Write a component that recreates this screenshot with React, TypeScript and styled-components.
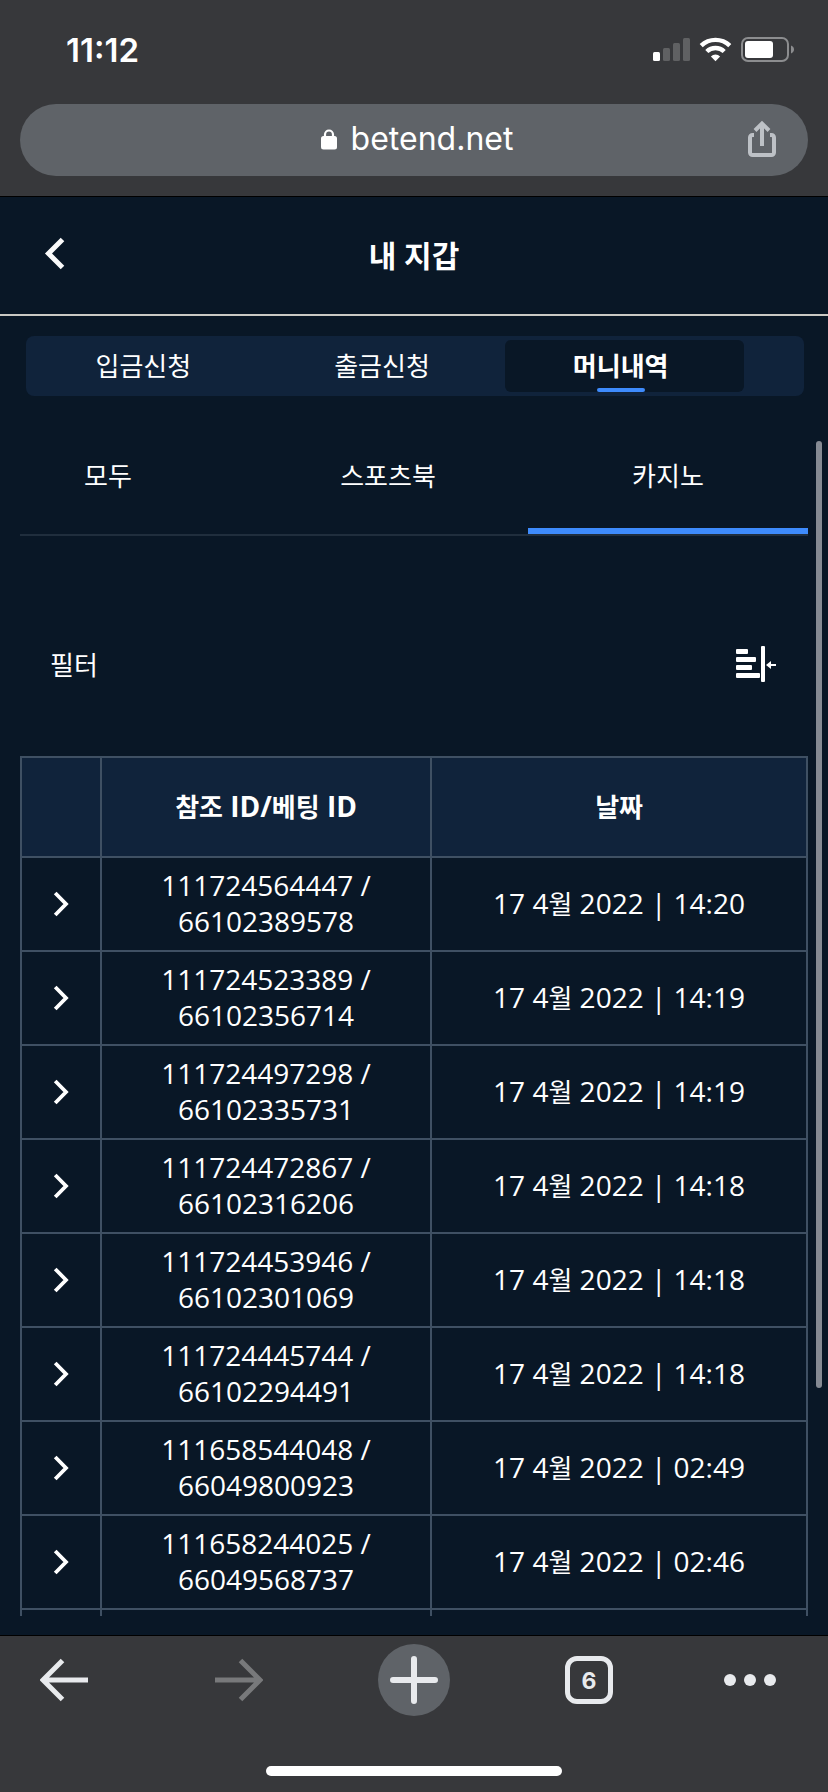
import React, { useState } from "react";
import styled, { createGlobalStyle } from "styled-components";

const colors = {
  chrome: "#37383b",
  pill: "#5f6368",
  page: "#091726",
  panel: "#10233b",
  accent: "#3e8bfc",
  border: "#3f5063",
  icon: "#e8eaed",
};

const GlobalStyle = createGlobalStyle`
  *, *::before, *::after { box-sizing: border-box; }
  html, body, #root { height: 100%; }
  body {
    margin: 0;
    background: ${colors.page};
    color: #fff;
    font-family: "Open Sans", "Noto Sans CJK KR", sans-serif;
    font-size: 28px;
  }
  button {
    padding: 0;
    border: 0;
    background: none;
    color: inherit;
    font: inherit;
    cursor: pointer;
  }
  svg { display: block; }
`;

const Screen = styled.div`
  display: flex;
  flex-direction: column;
  min-height: 100%;
`;

const BrowserTop = styled.header`
  padding: 0 20px 20px;
  background: ${colors.chrome};
  border-bottom: 1px solid #000;
  font-family: Inter, sans-serif;
`;

const StatusBar = styled.div`
  display: flex;
  align-items: center;
  justify-content: space-between;
  height: 104px;
  padding: 0 13px 4px 46px;
`;

const Clock = styled.time`
  font-size: 33px;
  font-weight: 600;
`;

const AddressBar = styled.div`
  display: grid;
  grid-template-columns: 1fr auto 1fr;
  align-items: center;
  height: 72px;
  padding: 0 32px 2px 38px;
  border-radius: 36px;
  background: ${colors.pill};
`;

const Address = styled.button`
  grid-column: 2;
  display: flex;
  align-items: center;
  gap: 14px;
  font-size: 32px;
  line-height: 40px;
`;

const ShareButton = styled.button`
  justify-self: end;
`;

const Page = styled.main`
  position: relative;
  flex: 1;
  background: ${colors.page};
`;

const ScrollThumb = styled.div`
  position: absolute;
  top: 244px;
  right: 6px;
  bottom: 247px;
  width: 6px;
  border-radius: 3px;
  background: #858a93;
`;

const PageHeader = styled.div`
  display: grid;
  grid-template-columns: 1fr auto 1fr;
  align-items: center;
  height: 119px;
  padding: 0 44px;
  border-bottom: 2px solid #cac9c4;
`;

const BackButton = styled.button`
  justify-self: start;
`;

const Title = styled.h1`
  margin: 0;
  font-size: 30px;
  line-height: 40px;
  font-weight: 700;
`;

const WalletTabs = styled.div`
  display: flex;
  height: 60px;
  margin: 20px 24px 0 26px;
  padding: 4px 60px 4px 2px;
  border-radius: 8px;
  background: ${colors.panel};
`;

const WalletTab = styled.button<{ $active: boolean }>`
  position: relative;
  flex: 1;
  padding: 0 8px 0 0;
  border-radius: 6px;
  background: ${(p) => (p.$active ? colors.page : "transparent")};
  font-size: 26px;
  line-height: 40px;
  font-weight: ${(p) => (p.$active ? 700 : 400)};

  &::after {
    content: "";
    position: absolute;
    bottom: 0;
    left: calc(50% - 28px);
    display: ${(p) => (p.$active ? "block" : "none")};
    width: 48px;
    height: 4px;
    border-radius: 2px;
    background: ${colors.accent};
  }
`;

const CategoryTabs = styled.div`
  display: flex;
  justify-content: flex-end;
  margin: 20px 20px 0;
  border-bottom: 2px solid #202e3d;
  overflow: hidden;
`;

const CategoryTab = styled.button<{ $active: boolean }>`
  flex: 1 0 280px;
  height: 118px;
  padding-top: 6px;
  border-bottom: 6px solid ${(p) => (p.$active ? colors.accent : "transparent")};
  font-size: 26px;
`;

const FilterRow = styled.div`
  display: flex;
  align-items: center;
  justify-content: space-between;
  margin: 108px 52px 72px 50px;
  height: 40px;
  font-size: 26px;
`;

const HistoryTable = styled.table`
  width: calc(100% - 40px);
  margin: 0 20px;
  border-collapse: collapse;
  table-layout: fixed;
`;

const ExpandCol = styled.col`
  width: 80px;
`;

const IdCol = styled.col`
  width: 42%;
`;

const HeadCell = styled.th`
  height: 100px;
  padding: 0 0 2px;
  border: 2px solid ${colors.border};
  background: ${colors.panel};
  font-weight: 700;
`;

const Cell = styled.td`
  height: 94px;
  padding: 0 48px 2px;
  border: 2px solid ${colors.border};
  line-height: 36px;
  text-align: center;
`;

const IconCell = styled(Cell)`
  padding: 0;
`;

const DateCell = styled(Cell)`
  padding: 0 0 2px;
  white-space: nowrap;
`;

const NextRowCell = styled.td`
  height: 7px;
  padding: 0;
  border: 2px solid ${colors.border};
  border-bottom: 0;
`;

const ExpandButton = styled.button`
  display: flex;
  align-items: center;
  justify-content: center;
  width: 100%;
  height: 72px;
`;

const Hangul = styled.span`
  font-size: 26px;
`;

const BrowserBottom = styled.footer`
  border-top: 1px solid #000;
  padding: 8px 24px 16px;
  background: ${colors.chrome};
  color: ${colors.icon};
`;

const Toolbar = styled.nav`
  display: flex;
  justify-content: space-between;
  height: 72px;
  margin-bottom: 50px;
`;

const ToolButton = styled.button<{ $align?: string }>`
  display: flex;
  align-items: center;
  justify-content: ${(p) => p.$align ?? "center"};
  width: 80px;

  &:disabled {
    color: #78797b;
  }
`;

const PlusDisc = styled.span`
  display: flex;
  align-items: center;
  justify-content: center;
  width: 72px;
  height: 72px;
  border-radius: 50%;
  background: ${colors.pill};
`;

const TabCount = styled.span`
  width: 48px;
  height: 48px;
  border: 5px solid ${colors.icon};
  border-radius: 12px;
  font-family: Inter, sans-serif;
  font-size: 23px;
  line-height: 40px;
  font-weight: 700;
  text-align: center;
`;

const HomeIndicator = styled.div`
  width: 296px;
  height: 10px;
  margin: 0 auto;
  border-radius: 5px;
  background: #fff;
`;

const StatusIcons = () => (
  <svg width="142" height="26" viewBox="0 0 142 26" aria-hidden="true">
    <rect x="0" y="15" width="7" height="9" rx="1.5" fill="#fff" />
    <rect x="10" y="11" width="7" height="13" rx="1.5" fill="#606163" />
    <rect x="20" y="6" width="7" height="18" rx="1.5" fill="#606163" />
    <rect x="30" y="1" width="7" height="23" rx="1.5" fill="#606163" />
    <g fill="none" stroke="#fff" strokeWidth="4.4">
      <path d="M48.2 8.6a20.6 20.6 0 0 1 28.6 0" />
      <path d="M53.8 14.5a12.4 12.4 0 0 1 17.4 0" />
    </g>
    <path d="M62.5 24.2l-4.6-4.8a6.6 6.6 0 0 1 9.2 0z" fill="#fff" />
    <rect x="89" y="1" width="46" height="23" rx="6" fill="none" stroke="#8c8d8f" strokeWidth="2" />
    <rect x="92" y="4" width="28" height="17" rx="3" fill="#fff" />
    <path d="M138 8.5c2 .7 3 2.3 3 4s-1 3.3-3 4z" fill="#8c8d8f" />
  </svg>
);

const LockIcon = () => (
  <svg width="16" height="22" viewBox="0 0 16 22" aria-hidden="true">
    <path d="M4 9V6.5a4 4 0 0 1 8 0V9" fill="none" stroke="#fff" strokeWidth="2.2" />
    <rect x="0" y="8" width="16" height="13.5" rx="2.5" fill="#fff" />
  </svg>
);

const ShareIcon = () => (
  <svg width="28" height="38" viewBox="0 0 28 38" fill="none" stroke="#bdc1c6" strokeWidth="4" aria-hidden="true">
    <path d="M6 15H4.5A2.5 2.5 0 0 0 2 17.5V32.5A2.5 2.5 0 0 0 4.5 35H23.5A2.5 2.5 0 0 0 26 32.5V17.5A2.5 2.5 0 0 0 23.5 15H22" />
    <path d="M14 26V4M7 10.5L14 3.5L21 10.5" />
  </svg>
);

const BackIcon = () => (
  <svg width="22" height="38" viewBox="0 0 22 38" aria-hidden="true">
    <path d="M18.5 2.5L4.5 16.5L18.5 30.5" fill="none" stroke="#fafafa" strokeWidth="5" />
  </svg>
);

const FilterIcon = () => (
  <svg width="40" height="36" viewBox="0 0 40 36" fill="#fff" aria-hidden="true">
    <rect x="0" y="3" width="12" height="5" rx="1" />
    <rect x="0" y="11" width="20" height="5" rx="1" />
    <rect x="0" y="19" width="16" height="5" rx="1" />
    <rect x="0" y="27" width="24" height="5" rx="1" />
    <rect x="25" y="0" width="4" height="36" rx="1" />
    <path d="M30 19l5-4v3h5v2h-5v3z" />
  </svg>
);

const ChevronIcon = () => (
  <svg width="16" height="26" viewBox="0 0 16 26" aria-hidden="true">
    <path d="M2.2 2L13 13L2.2 24" fill="none" stroke="#fff" strokeWidth="3.8" />
  </svg>
);

const ArrowIcon = ({ forward = false }: { forward?: boolean }) => (
  <svg width="48" height="44" viewBox="0 0 48 44" fill="none" stroke="currentColor" strokeWidth="5" aria-hidden="true">
    <path
      d={forward ? "M0 22H44M25.5 2.5L45 22L25.5 41.5" : "M48 22H4M22.5 2.5L3 22L22.5 41.5"}
    />
  </svg>
);

const PlusIcon = () => (
  <svg width="48" height="48" viewBox="0 0 48 48" aria-hidden="true">
    <path d="M24 3V45M3 24H45" stroke={colors.icon} strokeWidth="6" strokeLinecap="round" />
  </svg>
);

const MoreIcon = () => (
  <svg width="52" height="12" viewBox="0 0 52 12" fill="currentColor" aria-hidden="true">
    <circle cx="6" cy="6" r="6" />
    <circle cx="26" cy="6" r="6" />
    <circle cx="46" cy="6" r="6" />
  </svg>
);

const walletTabs = ["입금신청", "출금신청", "머니내역"];
const categoryTabs = ["모두", "스포츠북", "카지노"];

const rows = [
  { reference: "111724564447", bet: "66102389578", time: "14:20" },
  { reference: "111724523389", bet: "66102356714", time: "14:19" },
  { reference: "111724497298", bet: "66102335731", time: "14:19" },
  { reference: "111724472867", bet: "66102316206", time: "14:18" },
  { reference: "111724453946", bet: "66102301069", time: "14:18" },
  { reference: "111724445744", bet: "66102294491", time: "14:18" },
  { reference: "111658544048", bet: "66049800923", time: "02:49" },
  { reference: "111658244025", bet: "66049568737", time: "02:46" },
];

export default function App() {
  const [walletTab, setWalletTab] = useState("머니내역");
  const [category, setCategory] = useState("카지노");

  return (
    <Screen>
      <GlobalStyle />
      <BrowserTop>
        <StatusBar>
          <Clock>11:12</Clock>
          <StatusIcons />
        </StatusBar>
        <AddressBar>
          <Address type="button">
            <LockIcon />
            betend.net
          </Address>
          <ShareButton type="button" aria-label="공유">
            <ShareIcon />
          </ShareButton>
        </AddressBar>
      </BrowserTop>

      <Page>
        <PageHeader>
          <BackButton type="button" aria-label="뒤로">
            <BackIcon />
          </BackButton>
          <Title>내 지갑</Title>
        </PageHeader>

        <WalletTabs role="tablist">
          {walletTabs.map((label) => (
            <WalletTab
              key={label}
              type="button"
              role="tab"
              aria-selected={label === walletTab}
              $active={label === walletTab}
              onClick={() => setWalletTab(label)}
            >
              {label}
            </WalletTab>
          ))}
        </WalletTabs>

        <CategoryTabs role="tablist">
          {categoryTabs.map((label) => (
            <CategoryTab
              key={label}
              type="button"
              role="tab"
              aria-selected={label === category}
              $active={label === category}
              onClick={() => setCategory(label)}
            >
              {label}
            </CategoryTab>
          ))}
        </CategoryTabs>

        <FilterRow>
          <span>필터</span>
          <button type="button" aria-label="필터">
            <FilterIcon />
          </button>
        </FilterRow>

        <HistoryTable>
          <colgroup>
            <ExpandCol />
            <IdCol />
            <col />
          </colgroup>
          <thead>
            <tr>
              <HeadCell />
              <HeadCell scope="col">
                <Hangul>참조</Hangul> ID/<Hangul>베팅</Hangul> ID
              </HeadCell>
              <HeadCell scope="col">
                <Hangul>날짜</Hangul>
              </HeadCell>
            </tr>
          </thead>
          <tbody>
            {rows.map((row) => (
              <tr key={row.reference}>
                <IconCell>
                  <ExpandButton type="button" aria-label="상세 보기">
                    <ChevronIcon />
                  </ExpandButton>
                </IconCell>
                <Cell>
                  {row.reference} / {row.bet}
                </Cell>
                <DateCell>
                  17 4<Hangul>월</Hangul> 2022 | {row.time}
                </DateCell>
              </tr>
            ))}
            <tr aria-hidden="true">
              <NextRowCell />
              <NextRowCell />
              <NextRowCell />
            </tr>
          </tbody>
        </HistoryTable>
        <ScrollThumb />
      </Page>

      <BrowserBottom>
        <Toolbar>
          <ToolButton type="button" aria-label="뒤로 가기">
            <ArrowIcon />
          </ToolButton>
          <ToolButton type="button" aria-label="앞으로 가기" disabled>
            <ArrowIcon forward />
          </ToolButton>
          <ToolButton type="button" aria-label="새 탭">
            <PlusDisc>
              <PlusIcon />
            </PlusDisc>
          </ToolButton>
          <ToolButton type="button" aria-label="탭 6개">
            <TabCount>6</TabCount>
          </ToolButton>
          <ToolButton type="button" aria-label="더보기" $align="flex-start">
            <MoreIcon />
          </ToolButton>
        </Toolbar>
        <HomeIndicator />
      </BrowserBottom>
    </Screen>
  );
}
